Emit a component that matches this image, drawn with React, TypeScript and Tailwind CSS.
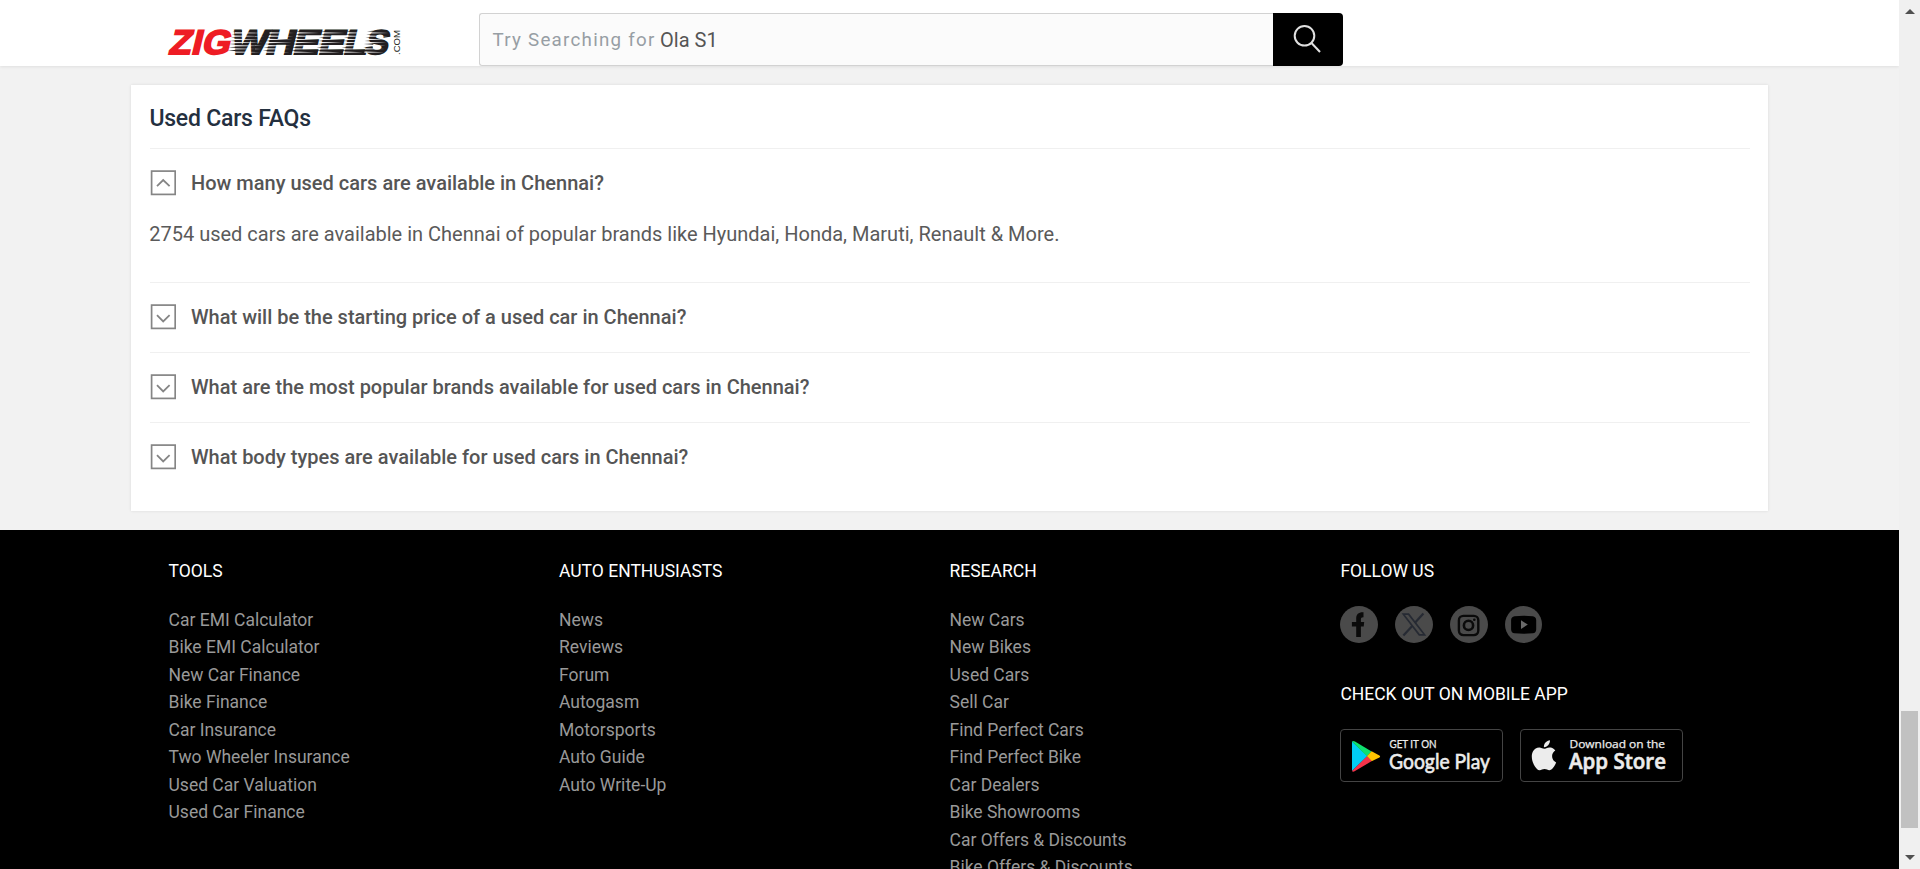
import React from "react";

const columns = [
  { title: "TOOLS", links: ["Car EMI Calculator", "Bike EMI Calculator", "New Car Finance", "Bike Finance", "Car Insurance", "Two Wheeler Insurance", "Used Car Valuation", "Used Car Finance"] },
  { title: "AUTO ENTHUSIASTS", links: ["News", "Reviews", "Forum", "Autogasm", "Motorsports", "Auto Guide", "Auto Write-Up"] },
  { title: "RESEARCH", links: ["New Cars", "New Bikes", "Used Cars", "Sell Car", "Find Perfect Cars", "Find Perfect Bike", "Car Dealers", "Bike Showrooms", "Car Offers & Discounts", "Bike Offers & Discounts"] },
];

const faqs = [
  { q: "How many used cars are available in Chennai?", a: "2754 used cars are available in Chennai of popular brands like Hyundai, Honda, Maruti, Renault & More." },
  { q: "What will be the starting price of a used car in Chennai?" },
  { q: "What are the most popular brands available for used cars in Chennai?" },
  { q: "What body types are available for used cars in Chennai?" },
];

// Letters of the wordmark: glyph, left edge on the baseline, width.
const red: [string, number, number][] = [["Z", -0.5, 22], ["I", 22, 10], ["G", 32.5, 28]];
const black: [string, number, number][] = [["W", 61, 36], ["H", 96, 29], ["E", 123.5, 26], ["E", 149, 26], ["L", 174, 23.5], ["S", 195.5, 23]];
const stripes = [1.8, 5, 8.2, 11.4, 14.6, 17.8, 21];

function Logo() {
  return (
    <svg width="236" height="32" viewBox="0 0 236 32" className="block overflow-visible" aria-label="ZigWheels">
      <g transform="translate(0.5 27) skewX(-13.5)" fontFamily="Liberation Sans" fontWeight="700" fontSize="34.2" strokeWidth="1.8">
        {red.map(([c, x, w], i) => (
          <text key={i} x={x} y="0" textLength={w} lengthAdjust="spacingAndGlyphs" fill="#ee1c24" stroke="#ee1c24">{c}</text>
        ))}
        {black.map(([c, x, w], i) => (
          <g key={i}>
            <text x={x} y="0" textLength={w} lengthAdjust="spacingAndGlyphs" fill="#231f20" stroke="#231f20">{c}</text>
            {stripes.map((s) => (
              <g key={s}>
                <path d={`M${x - 2.5} ${-s - 1.7}L${x + 7} ${-s - 2.5}V${-s - 1}Z`} fill="#231f20" />
                <path d={`M${x} ${-s - 0.7}L${x + w * 0.85} ${-s}L${x} ${-s + 0.6}Z`} fill="#fff" />
              </g>
            ))}
          </g>
        ))}
      </g>
      <text transform="translate(231.6 28) rotate(-90)" fontFamily="Liberation Sans" fontSize="9.5" textLength="25" lengthAdjust="spacingAndGlyphs" fill="#231f20">.COM</text>
    </svg>
  );
}

function Toggle({ open }: { open: boolean }) {
  return (
    <svg width="26" height="26" viewBox="0 0 26 26" fill="none" stroke="#858585" className="-mt-px block shrink-0">
      <rect x="1.6" y="1.1" width="23.6" height="23.3" strokeWidth="1.7" />
      <path d={open ? "M7 16.2L13.2 10L19.6 16.2" : "M7 11.2L13.2 17.4L19.6 11.2"} strokeWidth="1.8" />
    </svg>
  );
}

function Header() {
  return (
    <header className="relative z-10 flex h-[66px] shrink-0 bg-white pl-[168px] shadow-[0_1px_3px_rgba(0,0,0,0.08)]">
      <div className="w-[311px] pt-[27px]"><Logo /></div>
      <div className="mt-[13px] flex h-[53px] w-[864px]">
        <div className="flex flex-1 items-center rounded-l-[3px] border border-r-0 border-[#d2d2d2] bg-[#fbfbfb] pl-[12.5px]">
          <span className="pt-px text-[18.75px] tracking-[1.25px] text-[#979ea4]">Try Searching for</span>
          <span className="ml-[4.5px] pt-px text-[20px] text-[#555]">Ola S1</span>
        </div>
        <button className="flex w-[70px] justify-center rounded-r-[4px] bg-black pt-[11px]">
          <svg width="30" height="30" viewBox="0 0 30 30" fill="none" stroke="#e0e0e0" strokeWidth="2">
            <circle cx="11.5" cy="11.8" r="9.8" />
            <path d="M18.5 19L27 28" />
          </svg>
        </button>
      </div>
    </header>
  );
}

function Badge({ icon, top, name, w1, w2, font, topSize, size, weight }: { icon: React.ReactNode; top: string; name: string; w1: number; w2: number; font: string; topSize: number; size: number; weight: number }) {
  return (
    <a className="block h-[53px] w-[163px] rounded-[4px] border border-[#444]">
      <svg width="161" height="51" viewBox="0 0 161 51" fill="#ececec" fontFamily={font} className="block overflow-visible">
        {icon}
        <text x="48.5" y="18.4" fontSize={topSize} textLength={w1} lengthAdjust="spacingAndGlyphs" stroke="#ececec" strokeWidth="0.25">{top}</text>
        <text x="48" y="39.3" fontSize={size} fontWeight={weight} textLength={w2} lengthAdjust="spacingAndGlyphs" stroke="#ececec" strokeWidth="0.6">{name}</text>
      </svg>
    </a>
  );
}

function Social({ children, w = 38 }: { children: React.ReactNode; w?: number }) {
  return (
    <a className="block h-[37px]">
      <svg width={w} height="37" viewBox={`0 0 ${w} 37`}>
        <ellipse cx={w / 2} cy="18.5" rx={w / 2} ry="18.5" fill="#4a4a4a" />
        {children}
      </svg>
    </a>
  );
}

function Footer() {
  return (
    <footer className="flex flex-1 bg-black pl-[168.5px] pt-[30px] text-[17.5px]">
      {columns.map((c) => (
        <div key={c.title} className="w-[390.5px] shrink-0">
          <h3 className="leading-[22px] text-white">{c.title}</h3>
          <ul className="pt-[24.6px] text-[#999]">
            {c.links.map((l) => <li key={l} className="leading-[27.5px]">{l}</li>)}
          </ul>
        </div>
      ))}
      <div>
        <h3 className="pl-[0.4px] leading-[22px] text-white">FOLLOW US</h3>
        <div className="flex gap-[17px] pt-[24px]">
          <Social>
            <path d="M16.2 31V20.6H11.9V15.9H16.2V12.5C16.2 8.2 18.8 6 23.5 6.3V11.2C21.5 11.1 20.9 11.8 20.9 13.3V15.9H24.2L23.7 20.6H20.9V31Z" fill="#0a0a0a" />
          </Social>
          <Social>
            <g fill="none" stroke="#262a33" strokeWidth="1.7">
              <path d="M8.3 8.2H13.6L29.6 28.8H24.3Z" />
              <path d="M28.4 7.6L20.2 16.6M17 20.3L8.4 29.6" strokeWidth="2.2" />
            </g>
          </Social>
          <Social>
            <g fill="none" stroke="#0a0a0a">
              <rect x="8.9" y="9.9" width="19.4" height="19.2" rx="4.5" strokeWidth="2.4" />
              <circle cx="18.5" cy="19.4" r="4.6" strokeWidth="2.6" />
            </g>
            <circle cx="24.3" cy="13.8" r="1.3" fill="#0a0a0a" />
          </Social>
          <Social w={37}>
            <path d="M9.5 10.2Q18.5 9.2 27.8 10.2Q31 10.6 31.2 14V23.5Q31 27 27.8 27.3Q18.5 28.2 9.5 27.3Q6.3 27 6.1 23.5V14Q6.3 10.6 9.5 10.2Z" fill="#000" />
            <path d="M16 14.3L22.8 18.6L16 22.9Z" fill="#6a6a6a" />
          </Social>
        </div>
        <h3 className="pl-[0.4px] pt-[40px] leading-[22px] text-white">CHECK OUT ON MOBILE APP</h3>
        <div className="flex gap-[17px] pt-[24px]">
          <Badge
            top="GET IT ON" name="Google Play" w1={47} w2={101} font="Lato" topSize={10.5} size={21.5} weight={400}
            icon={<g><path d="M11 11.5L26.5 26L11 41Z" fill="#00cdf5" /><path d="M11 11.5C11.5 10.6 12.8 10.8 14 11.5L30.6 21.6L26 26.2Z" fill="#0fe06f" /><path d="M30.6 21.3L38.4 25.6C39.4 26.3 39.3 26.9 38.4 27.4L30.6 31.3L25.8 26.3Z" fill="#fec400" /><path d="M11 41C11.6 42 12.8 41.8 14 41L30.8 31.1L26 26.2Z" fill="#f43249" /></g>}
          />
          <Badge
            top="Download on the" name="App Store" w1={95.5} w2={97} font="Open Sans" topSize={10.5} size={21} weight={600}
            icon={<path transform="translate(5 7.2) scale(1.5)" d="M18.71 19.5c-.83 1.24-1.71 2.45-3.05 2.47-1.34.03-1.77-.79-3.29-.79-1.53 0-2 .77-3.27.82-1.31.05-2.3-1.32-3.14-2.53C4.25 17 2.94 12.45 4.7 9.39c.87-1.52 2.43-2.48 4.12-2.51 1.28-.02 2.5.87 3.29.87.78 0 2.26-1.07 3.81-.91.65.03 2.47.26 3.64 1.98-.09.06-2.17 1.28-2.15 3.81.03 3.02 2.65 4.03 2.68 4.04-.03.07-.42 1.44-1.38 2.83M13 3.5c.73-.83 1.94-1.46 2.94-1.5.13 1.17-.34 2.35-1.04 3.19-.69.85-1.83 1.51-2.95 1.42-.15-1.15.41-2.35 1.05-3.11z" />}
          />
        </div>
      </div>
    </footer>
  );
}

export default function App() {
  return (
    <div className="flex h-[869px] w-[1920px] overflow-hidden bg-[#f2f2f2] font-[Roboto,sans-serif]">
      <div className="flex h-full w-[1899px] flex-col overflow-hidden">
        <Header />
        <main className="h-[464px] shrink-0 px-[131px] pt-[19px]">
          <section className="h-[426px] bg-white pl-[19px] pr-[18px] shadow-[0_0_3px_rgba(0,0,0,0.1)]">
            <h2 className="-ml-[0.6px] h-[63px] pt-[20px] text-[23px] leading-[28px] font-medium tracking-[-0.22px] text-[#24303f]">Used Cars FAQs</h2>
            {faqs.map((f) => (
              <div key={f.q} className={f.a ? "h-[134px] border-t border-[#f0f0f0]" : "h-[70px] border-t border-[#f0f0f0]"}>
                <div className="flex gap-[15px] pt-[22px]">
                  <Toggle open={!!f.a} />
                  <h3 className="text-[20px] leading-[25px] font-medium text-[#555]">{f.q}</h3>
                </div>
                {f.a && <p className="-ml-[0.8px] pt-[25px] text-[20px] leading-[27px] text-[#5a5a5a]">{f.a}</p>}
              </div>
            ))}
          </section>
        </main>
        <Footer />
      </div>
      <aside className="flex h-full w-[21px] flex-col items-center bg-[#f0f0f0] pt-[9px] pb-[9px]">
        <svg width="10" height="5"><path d="M0 5L5 0L10 5Z" fill="#505050" /></svg>
        <div className="mt-[697px] h-[117px] w-[17px] bg-[#c1c1c1]" />
        <svg width="10" height="5" className="mt-auto"><path d="M0 0H10L5 5Z" fill="#505050" /></svg>
      </aside>
    </div>
  );
}
